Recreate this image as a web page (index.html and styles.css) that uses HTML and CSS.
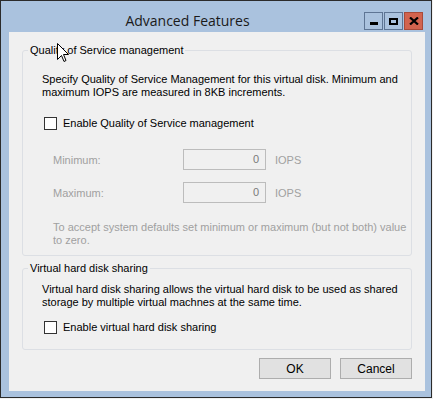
FILE: index.html
```html
<!DOCTYPE html>
<html lang="en">
<head>
    <meta charset="UTF-8">
    <title>Advanced Features</title>
    <link rel="stylesheet" href="styles.css">
</head>
<body>
    <div class="window">
        <div class="titlebar">
            <div class="title">Advanced Features</div>
            <div class="controls">
                <span class="ctl"><span class="ico-min"></span></span>
                <span class="ctl"><span class="ico-max"></span></span>
                <span class="ctl close">
                    <svg width="10" height="8" viewBox="0 0 10 8"><path d="M1 0.5 L9 7.5 M9 0.5 L1 7.5" stroke="#000" stroke-width="2.2"/></svg>
                </span>
            </div>
        </div>

        <div class="client">
            <fieldset class="group qos">
                <legend>Quality of Service management</legend>
                <div class="group-body">
                    <p class="desc">Specify Quality of Service Management for this virtual disk. Minimum and maximum IOPS are measured in 8KB increments.</p>
                    <label class="check"><span class="box"></span>Enable Quality of Service management</label>
                    <div class="iops">
                        <span class="lbl">Minimum:</span>
                        <span class="field">0</span>
                        <span class="unit">IOPS</span>
                        <span class="lbl">Maximum:</span>
                        <span class="field">0</span>
                        <span class="unit">IOPS</span>
                    </div>
                    <p class="note">To accept system defaults set minimum or maximum (but not both) value to zero.</p>
                </div>
            </fieldset>

            <fieldset class="group sharing">
                <legend>Virtual hard disk sharing</legend>
                <div class="group-body">
                    <p class="desc">Virtual hard disk sharing allows the virtual hard disk to be used as shared storage by multiple virtual machnes at the same time.</p>
                    <label class="check"><span class="box"></span>Enable virtual hard disk sharing</label>
                </div>
            </fieldset>

            <div class="actions">
                <button>OK</button>
                <button>Cancel</button>
            </div>
        </div>

        <svg class="cursor" width="12" height="20" viewBox="0 0 12 20">
            <path d="M0.5 0.5 L0.5 16.5 L4.5 12.5 L7 18.5 L9 17.5 L6.5 11.5 L11.5 11.5 Z" fill="#fff" stroke="#000" stroke-width="1"/>
        </svg>
    </div>
</body>
</html>
```

FILE: styles.css
```css
body {
    margin: 0;
    background: #f0f0f0;
    font-family: "Liberation Sans", Arial, sans-serif;
    font-size: 11px;
}

.window {
    position: relative;
    width: 430px;
    height: 396px;
    border: 1px solid #2b2b2b;
    background: #aac2de;
    display: flex;
    flex-direction: column;
}

.titlebar {
    height: 31px;
    display: flex;
    align-items: flex-start;
}

.title {
    flex: 1;
    text-align: center;
    padding-top: 10px;
    padding-left: 10px;
    font-family: "Open Sans", sans-serif;
    font-size: 14px;
    line-height: 19px;
    color: #1a1a1a;
}

.controls {
    display: flex;
    gap: 1px;
    padding-top: 11px;
    padding-right: 8px;
}

.ctl {
    width: 17px;
    height: 16px;
    border: 1px solid #5e7594;
    display: flex;
    align-items: center;
    justify-content: center;
}

.ctl.close {
    background: #d2634e;
    border-color: #a84a39;
}

.ico-min {
    width: 8px;
    height: 3px;
    background: #000;
    margin-top: 4px;
}

.ico-max {
    width: 5px;
    height: 3px;
    border: 2px solid #000;
}

.client {
    flex: 1;
    margin: 0 6px 6px 8px;
    background: #f0f0f0;
    padding: 12px 13px 0 13px;
}

.group {
    margin: 0;
    padding: 0;
    border: 1px solid #dcdfe4;
    border-radius: 3px;
}

.group legend {
    margin-left: 5px;
    padding: 0 2px;
    line-height: 13px;
}

.group-body {
    padding: 0 0 0 19px;
}

.desc {
    margin: 0;
    line-height: 13px;
}

.qos .desc {
    padding-top: 16px;
}

.check {
    display: flex;
    align-items: center;
    gap: 6px;
    margin-left: 2px;
    line-height: 13px;
}

.qos .check {
    margin-top: 18px;
}

.sharing .desc {
    padding-top: 8px;
}

.sharing .check {
    margin-top: 12px;
    margin-bottom: 15px;
}

.box {
    width: 11px;
    height: 11px;
    border: 1px solid #333;
    background: #fff;
}

.iops {
    display: grid;
    grid-template-columns: 121px 83px auto;
    column-gap: 9px;
    row-gap: 12px;
    align-items: center;
    margin-top: 19px;
    margin-left: 11px;
    color: #a0a0a0;
}

.field {
    height: 19px;
    border: 1px solid #bcbcbc;
    text-align: right;
    padding-right: 6px;
    line-height: 19px;
    color: #7a7a7a;
}

.note {
    margin: 18px 0 8px 11px;
    line-height: 13px;
    color: #a0a0a0;
}

.sharing {
    margin-top: 6px;
}

.actions {
    display: flex;
    justify-content: flex-end;
    gap: 9px;
    margin-top: 8px;
}

.actions button {
    width: 72px;
    height: 21px;
    border: 1px solid #adadad;
    background: #e1e1e1;
    font-family: "Liberation Sans", Arial, sans-serif;
    font-size: 12px;
    color: #000;
    padding: 0;
}

.cursor {
    position: absolute;
    left: 56px;
    top: 42px;
}
```
